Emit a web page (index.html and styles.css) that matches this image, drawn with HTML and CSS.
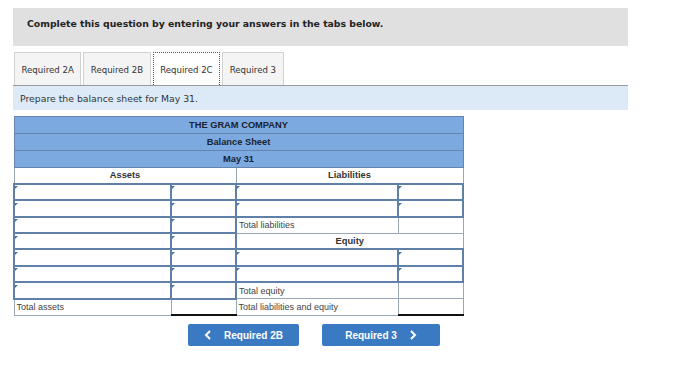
FILE: index.html
```html
<!DOCTYPE html>
<html lang="en">
<head>
    <meta charset="UTF-8">
    <title>Balance Sheet</title>
    <link rel="stylesheet" href="styles.css">
</head>
<body>
    <div class="page">
        <div class="question-bar">Complete this question by entering your answers in the tabs below.</div>

        <div class="tabs">
            <div class="tab">Required 2A</div>
            <div class="tab">Required 2B</div>
            <div class="tab active">Required 2C</div>
            <div class="tab">Required 3</div>
        </div>
        <div class="prompt">Prepare the balance sheet for May 31.</div>

        <table class="sheet">
            <colgroup>
                <col class="c-label-l">
                <col class="c-amt">
                <col class="c-label-r">
                <col class="c-amt">
            </colgroup>
            <tr class="head"><td colspan="4">THE GRAM COMPANY</td></tr>
            <tr class="head"><td colspan="4">Balance Sheet</td></tr>
            <tr class="head"><td colspan="4">May 31</td></tr>
            <tr class="section">
                <td colspan="2">Assets</td>
                <td colspan="2">Liabilities</td>
            </tr>
            <tr>
                <td class="in"><div class="field"></div></td>
                <td class="in"><div class="field"></div></td>
                <td class="in"><div class="field"></div></td>
                <td class="in"><div class="field"></div></td>
            </tr>
            <tr>
                <td class="in"><div class="field"></div></td>
                <td class="in"><div class="field"></div></td>
                <td class="in"><div class="field"></div></td>
                <td class="in"><div class="field"></div></td>
            </tr>
            <tr>
                <td class="in"><div class="field"></div></td>
                <td class="in"><div class="field"></div></td>
                <td class="label">Total liabilities</td>
                <td></td>
            </tr>
            <tr>
                <td class="in"><div class="field"></div></td>
                <td class="in"><div class="field"></div></td>
                <td class="section-cell" colspan="2">Equity</td>
            </tr>
            <tr>
                <td class="in"><div class="field"></div></td>
                <td class="in"><div class="field"></div></td>
                <td class="in"><div class="field"></div></td>
                <td class="in"><div class="field"></div></td>
            </tr>
            <tr>
                <td class="in"><div class="field"></div></td>
                <td class="in"><div class="field"></div></td>
                <td class="in"><div class="field"></div></td>
                <td class="in"><div class="field"></div></td>
            </tr>
            <tr>
                <td class="in"><div class="field"></div></td>
                <td class="in"><div class="field"></div></td>
                <td class="label">Total equity</td>
                <td></td>
            </tr>
            <tr>
                <td class="label">Total assets</td>
                <td class="total"></td>
                <td class="label">Total liabilities and equity</td>
                <td class="total"></td>
            </tr>
        </table>

        <div class="nav">
            <div class="btn prev">
                <svg width="8" height="10" viewBox="0 0 8 10"><path d="M6 1 L2 5 L6 9" fill="none" stroke="#fff" stroke-width="2"/></svg>
                <span>Required 2B</span>
            </div>
            <div class="btn next">
                <span>Required 3</span>
                <svg width="8" height="10" viewBox="0 0 8 10"><path d="M2 1 L6 5 L2 9" fill="none" stroke="#fff" stroke-width="2"/></svg>
            </div>
        </div>
    </div>
</body>
</html>
```

FILE: styles.css
```css
/* Reset */
body, html, div, table, td {
    margin: 0;
    padding: 0;
}

body {
    background: #fff;
    font-family: "DejaVu Sans", Verdana, sans-serif;
    color: #222;
}

.page {
    padding: 8px 0 0 13px;
}

.question-bar {
    width: 601px;
    height: 38px;
    line-height: 31px;
    padding-left: 14px;
    background: #e0e0e0;
    font-size: 9.3px;
    font-weight: bold;
    color: #222;
}

.tabs {
    display: flex;
    gap: 2px;
    margin-top: 6px;
    padding-left: 1px;
}

.tab {
    height: 32px;
    line-height: 34px;
    padding: 0 6.5px;
    border: 1px solid #d2d2d2;
    border-bottom: none;
    background: #f4f4f4;
    font-size: 8.6px;
    color: #333;
}

.tab.active {
    background: #fff;
    border: 1px dotted #555;
    border-bottom: none;
}

.prompt {
    width: 608px;
    height: 24px;
    line-height: 26px;
    padding-left: 7px;
    border-top: 1px solid #9a9a9a;
    background: #dceaf8;
    font-size: 9.3px;
    color: #333;
}

/* balance sheet table */
.sheet {
    margin: 6px 0 0 0;
    width: 448px;
    border-collapse: collapse;
    table-layout: fixed;
    font-family: "Liberation Sans", Arial, sans-serif;
    font-size: 9px;
    color: #333;
}

.c-label-l { width: 157px; }
.c-amt { width: 65px; }
.c-label-r { width: 162px; }

.sheet tr {
    height: 16.4px;
}

.sheet td {
    border: 1px solid #9aa7b6;
    padding: 0;
}

.head td {
    background: #7caae0;
    border-color: #6585b0;
    text-align: center;
    font-weight: bold;
    font-size: 9.3px;
    color: #1a2230;
    height: 16px;
}

.section td, .section-cell {
    text-align: center;
    font-weight: bold;
    font-size: 9.3px;
    color: #333;
}

.sheet td.in {
    border: 2px solid #5f80a8;
    height: 11.5px;
}

.field {
    position: relative;
    height: 11.5px;
}

.field::before {
    content: "";
    position: absolute;
    left: 0;
    top: 0;
    border-top: 3px solid #4b74a6;
    border-right: 3px solid transparent;
}

.label {
    padding-left: 2px !important;
    color: #444;
}

.sheet td.total {
    border-left: 1px solid #333;
    border-bottom: 2px solid #111;
}

/* buttons */
.nav {
    display: flex;
    gap: 23px;
    margin: 8px 0 0 175px;
}

.btn {
    display: flex;
    align-items: center;
    justify-content: center;
    gap: 12px;
    height: 22px;
    background: #3a7ac3;
    border-radius: 2px;
    color: #fff;
    font-family: "Liberation Sans", Arial, sans-serif;
    font-weight: bold;
    font-size: 10px;
}

.btn.prev {
    width: 111px;
}

.btn.next {
    width: 118px;
}
```
